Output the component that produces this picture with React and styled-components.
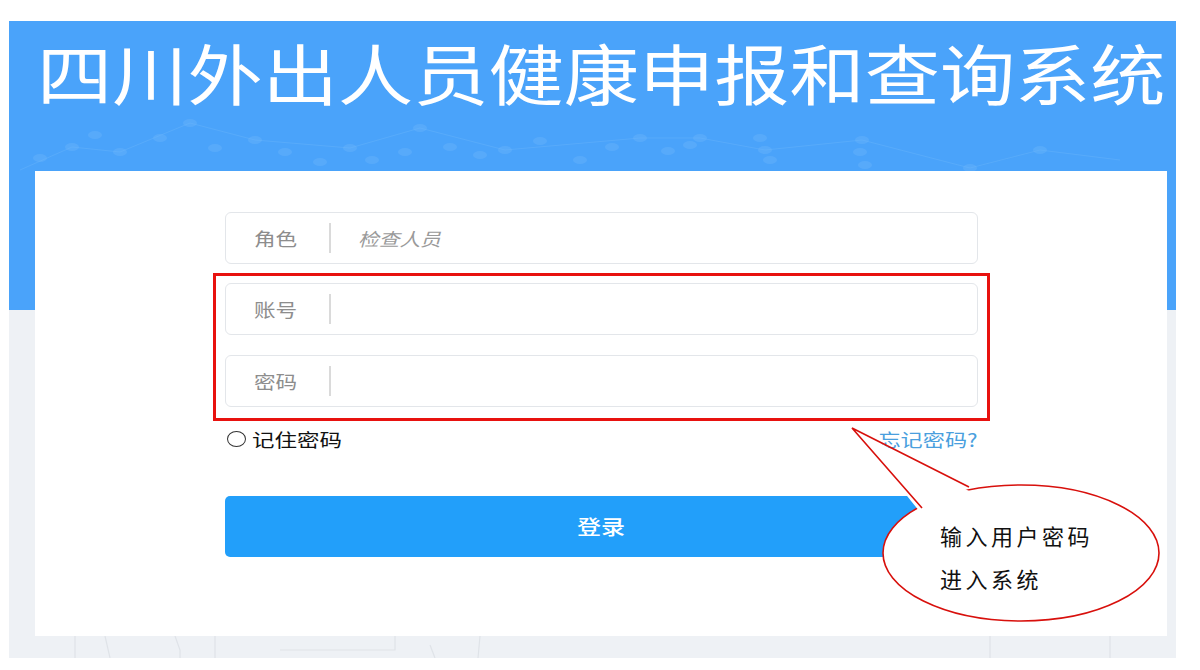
import React from 'react';
import styled, { createGlobalStyle } from 'styled-components';

const GlobalStyle = createGlobalStyle`
  html, body { margin: 0; padding: 0; background: #fff; }
  body { font-family: "Noto Sans CJK SC", "Noto Sans", sans-serif; }
`;

// the original screenshot is stretched sideways, so text is widened with scaleX
const Wide = styled.span`
  display: inline-block;
  transform: scaleX(${p => p.$x || 1.2});
  transform-origin: ${p => p.$origin || 'left'} center;
  white-space: nowrap;
`;

const Frame = styled.div`
  position: relative;
  margin: 21px 24px 12px 9px;
  height: 637px;
  background: linear-gradient(#4aa3fa 0, #4aa3fa 289px, #eef1f5 289px);
  overflow: hidden;
`;

const Decor = styled.svg`
  position: absolute;
  left: 0;
  top: 0;
  pointer-events: none;
`;

const Title = styled.h1`
  position: relative;
  margin: 0;
  height: 150px;
  padding: 17px 0 0 28px;
  box-sizing: border-box;
  color: #fff;
  font-size: 66px;
  line-height: 66px;
  font-weight: 400;
`;

const Card = styled.div`
  position: relative;
  margin: 0 9px 0 26px;
  height: 465px;
  background: #fff;
  padding-top: 41px;
  box-sizing: border-box;
`;

const Form = styled.div`
  width: 753px;
  margin: 0 auto;
`;

const Field = styled.div`
  display: flex;
  align-items: center;
  height: 52px;
  box-sizing: border-box;
  border: 1px solid #e3e6ea;
  border-radius: 6px;
  background: #fff;
  padding-left: 28px;
  margin-top: ${p => p.$gap || 0}px;
`;

const Label = styled.span`
  width: 48px;
  font-size: 18px;
  color: #8d8d8d;
`;

const Divider = styled.span`
  width: 2px;
  height: 30px;
  background: #dadada;
  margin: 0 27px;
`;

const Placeholder = styled.span`
  font-size: 18px;
  font-style: italic;
  color: #9a9a9a;
`;

const Highlight = styled.div`
  margin: 9px -12px 0;
  padding: 7px 9px 11px;
  border: 3px solid #e8120f;
`;

const Options = styled.div`
  display: flex;
  align-items: center;
  justify-content: space-between;
  margin-top: 7px;
  height: 22px;
`;

const Remember = styled.label`
  display: flex;
  align-items: center;
  font-size: 18px;
  color: #111;
`;

const Radio = styled.span`
  width: 17px;
  height: 14px;
  border: 1.5px solid #333;
  border-radius: 50%;
  margin: 0 6px 0 2px;
`;

const Forgot = styled.a`
  font-size: 18px;
  color: #4a9fde;
  text-decoration: none;
`;

const LoginButton = styled.button`
  display: block;
  width: 100%;
  height: 61px;
  margin-top: 46px;
  border: 0;
  border-radius: 5px;
  background: #229ffa;
  color: #fff;
  font-family: inherit;
  font-size: 20px;
  font-weight: 500;
`;

const Callout = styled.div`
  position: absolute;
  left: 0;
  top: 0;
  width: 100%;
  height: 100%;
  pointer-events: none;
`;

const CalloutText = styled.div`
  position: absolute;
  left: 931px;
  top: 495px;
  font-family: "Liberation Serif", "Noto Sans CJK SC", serif;
  font-size: 22px;
  letter-spacing: 3.5px;
  line-height: 43px;
  color: #111;
`;

const dots = [
  [40, 158], [72, 147], [95, 135], [120, 152], [160, 138], [190, 123], [215, 148], [255, 140],
  [285, 152], [320, 162], [350, 148], [372, 160], [405, 152], [420, 128], [450, 147], [480, 155],
  [505, 150], [540, 141], [580, 160], [612, 147], [640, 138], [668, 151], [690, 145], [700, 138],
  [760, 138], [765, 150], [770, 160], [862, 140], [860, 152], [865, 165], [970, 168], [1040, 150],
];

export default function App() {
  return (
    <>
      <GlobalStyle />
      <Frame>
        <Decor width="1167" height="637" viewBox="9 21 1167 637">
          <g fill="#6cb6fb" opacity="0.4">
            {dots.map(([x, y], i) => (
              <ellipse key={i} cx={x} cy={y} rx={7} ry={4} />
            ))}
          </g>
          <g stroke="#6cb6fb" strokeWidth="1" fill="none" opacity="0.4">
            <polyline points="20,170 72,147 120,152 190,123 255,140 350,148 420,128 505,150 640,138 700,138" />
            <polyline points="700,138 765,150 862,140 970,168 1040,150 1120,160" />
          </g>
          <g stroke="#dfe3e8" strokeWidth="1.2" fill="none">
            <polyline points="75,636 75,658" />
            <polyline points="105,636 110,658" />
            <polyline points="175,636 180,650 180,658" />
            <polyline points="215,636 215,658" />
            <polyline points="280,650 395,650 395,636" />
            <polyline points="430,645 435,658" />
            <polyline points="480,636 478,658" />
            <polyline points="990,636 990,658" />
            <polyline points="1110,636 1110,658" />
          </g>
        </Decor>
        <Title>
          <Wide $x={1.14}>四川外出人员健康申报和查询系统</Wide>
        </Title>
        <Card>
          <Form>
            <Field>
              <Label><Wide>角色</Wide></Label>
              <Divider />
              <Placeholder><Wide $x={1.15}>检查人员</Wide></Placeholder>
            </Field>
            <Highlight>
              <Field>
                <Label><Wide>账号</Wide></Label>
                <Divider />
              </Field>
              <Field $gap={20}>
                <Label><Wide>密码</Wide></Label>
                <Divider />
              </Field>
            </Highlight>
            <Options>
              <Remember>
                <Radio />
                <Wide $x={1.25}>记住密码</Wide>
              </Remember>
              <Forgot href="#"><Wide $x={1.23} $origin="right">忘记密码?</Wide></Forgot>
            </Options>
            <LoginButton><Wide $origin="center">登录</Wide></LoginButton>
          </Form>
        </Card>
        <Callout>
          <svg width="1167" height="637" viewBox="9 21 1167 637">
            <ellipse cx="1021" cy="553" rx="138" ry="68" fill="#fff" stroke="#d8100c" strokeWidth="1.6" />
            <polygon points="852,428 969,491 920,512" fill="#fff" />
            <polyline points="969,487 852,428 922,508" fill="none" stroke="#d8100c" strokeWidth="1.6" />
          </svg>
          <CalloutText>
            输入用户密码
            <br />
            进入系统
          </CalloutText>
        </Callout>
      </Frame>
    </>
  );
}
